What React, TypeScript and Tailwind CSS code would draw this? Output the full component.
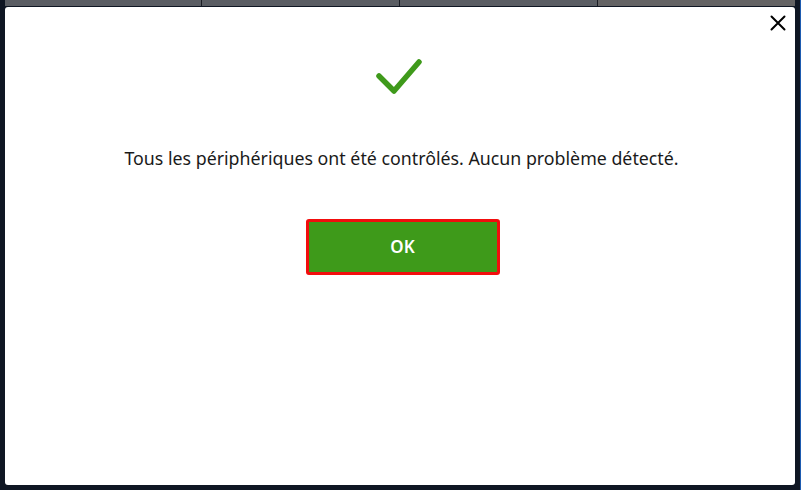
import React from 'react';

export default function App() {
  return (
    <div className="flex h-[490px] w-[801px] overflow-hidden bg-[#0f1623]" style={{ fontFamily: '"Noto Sans", "Open Sans", sans-serif' }}>
      <div className="w-[5px] shrink-0" />
      <div className="flex w-[790px] shrink-0 flex-col">
        <div className="flex h-[6px]">
          <div className="w-[196px] bg-[#5a5d63]" />
          <div className="w-[198px] border-l border-[#1a1d24] bg-[#5a5d63]" />
          <div className="w-[198px] border-l border-[#1a1d24] bg-[#5a5d63]" />
          <div className="flex-1 border-l border-[#1a1d24] bg-[#646364]" />
        </div>
        <div className="relative mt-[1px] flex h-[478px] flex-col items-center rounded-[3px] bg-white">
          <button className="absolute right-[9px] top-[8px] flex h-[16px] w-[16px] items-center justify-center text-black">
            <svg width="16" height="16" viewBox="0 0 16 16" fill="none" stroke="currentColor" strokeWidth="2" strokeLinecap="round">
              <path d="M1.5 1.5 L14.5 14.5 M14.5 1.5 L1.5 14.5" />
            </svg>
          </button>
          <svg className="mt-[51px]" width="50" height="40" viewBox="0 0 50 40" fill="none" stroke="#3f9a1b" strokeWidth="5.5" strokeLinecap="round" strokeLinejoin="round">
            <path d="M4 18 L19 33 L44 4" />
          </svg>
          <p className="mt-[47px] ml-[3px] text-[17.8px] leading-[26px] text-[#1a1a1a]">
            Tous les périphériques ont été contrôlés. Aucun problème détecté.
          </p>
          <button className="mt-[48px] ml-[5px] flex h-[56px] w-[194px] items-center justify-center rounded-[3px] border-[3px] border-[#f20d0d] bg-[#3e9a1a] text-[17px] font-semibold text-white">
            OK
          </button>
        </div>
      </div>
      <div className="w-[5px] shrink-0" />
      <div className="w-[1px] shrink-0 bg-[#1e5bb0]" />
    </div>
  );
}
